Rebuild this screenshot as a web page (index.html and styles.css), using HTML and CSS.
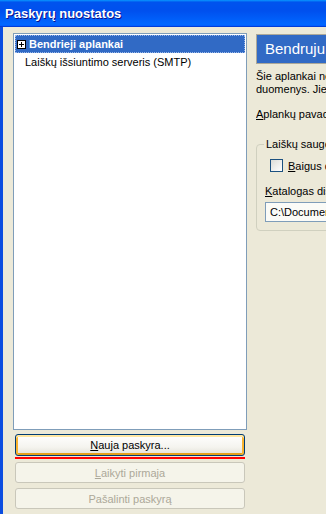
FILE: index.html
```html
<!DOCTYPE html>
<html>
<head>
  <meta charset="utf-8">
  <link rel="stylesheet" href="styles.css">
</head>
<body>
  <div class="window">
    <div class="title-bar">Paskyrų nuostatos</div>
    <div class="window-body">
      <div class="accounts">
        <div class="tree">
          <div class="tree-item selected">
            <svg class="expander" width="9" height="9" viewBox="0 0 9 9">
              <rect x="0.5" y="0.5" width="8" height="8" fill="#fff" stroke="#000"/>
              <path d="M2 4.5h5M4.5 2v5" stroke="#000"/>
            </svg>
            <span class="label">Bendrieji aplankai</span>
          </div>
          <div class="tree-item child">Laiškų išsiuntimo serveris (SMTP)</div>
        </div>
        <button class="btn focused"><u>N</u>auja paskyra...</button>
        <div class="marker"></div>
        <button class="btn second" disabled><u>L</u>aikyti pirmaja</button>
        <button class="btn third" disabled>Pašalinti paskyrą</button>
      </div>

      <div class="settings">
        <div class="settings-header">Bendruju aplankų nuostatos</div>
        <p class="intro">Šie aplankai nepriklauso jokiai paskyrai, juose saugomi bendri<br>duomenys. Jie matomi visoms paskyroms.</p>
        <div class="row"><u>A</u>plankų pavadinimas:</div>
        <fieldset class="group">
          <legend>Laiškų saugojimas</legend>
          <label class="check"><span class="box"></span><span><u>B</u>aigus darbą išvalyti šiukšlinę</span></label>
          <div class="row"><u>K</u>atalogas diske:</div>
          <div class="path">C:\Documents and Settings\Vartotojas\Mail</div>
        </fieldset>
      </div>
    </div>
  </div>
</body>
</html>
```

FILE: styles.css
```css
/* Windows XP style account settings dialog */
body {
  margin: 0;
  width: 326px;
  height: 514px;
  overflow: hidden;
  font-family: "Liberation Sans", Arial, sans-serif;
  font-size: 11px;
  color: #000;
}

.window {
  height: 514px;
  background-color: #ece9d8;
}

.title-bar {
  height: 27px;
  line-height: 27px;
  padding-left: 5px;
  color: #fff;
  font-size: 13px;
  font-weight: bold;
  text-shadow: 1px 1px #0f1089;
  background: linear-gradient(180deg, #0997ff, #0053ee 8%, #0050ee 40%, #06f 88%, #06f 93%, #005bff 95%, #003dd7 96%, #003dd7);
}

.window-body {
  display: flex;
  gap: 9px;
  height: 487px;
  padding: 6px 0 0 10px;
  border-left: 3px solid #0b4de0;
  box-sizing: border-box;
}

.accounts {
  display: flex;
  flex-direction: column;
  width: 234px;
  flex-shrink: 0;
}

.tree {
  height: 397px;
  box-sizing: border-box;
  padding: 1px;
  border: 1px solid #7f9db9;
  background-color: #fff;
}

.tree-item {
  display: flex;
  align-items: center;
  height: 18px;
  white-space: nowrap;
}

.tree-item.selected {
  padding-left: 2px;
  color: #fff;
  font-weight: bold;
  background-color: #316ac5;
  outline: 1px dotted #9ab8e8;
  outline-offset: -1px;
}

.expander {
  margin-right: 3px;
}

.tree-item.child {
  padding-left: 10px;
}

.btn {
  height: 22px;
  margin: 4px 2px 0;
  padding: 0;
  font-family: inherit;
  font-size: 11px;
  color: #000;
  border: 1px solid #003c74;
  border-radius: 3px;
  background: linear-gradient(180deg, #fff, #f5f4ef 60%, #e3e1d7);
}

.btn.focused {
  box-shadow: inset 0 2px 0 #ffe7a2, inset 2px 0 0 #f8b330, inset -2px 0 0 #f8b330, inset 0 -2px 0 #e5a01a;
}

.btn:disabled {
  height: 21px;
  color: #aca899;
  border-color: #c9c7ba;
  background: #f5f4ea;
}

.btn.second {
  margin-top: 3px;
}

.btn.third {
  margin-top: 5px;
}

.marker {
  height: 2px;
  margin: 1px 2px 0;
  background-color: #f00;
}

.settings {
  flex: 1;
  padding-top: 1px;
  white-space: nowrap;
  overflow: hidden;
}

.settings-header {
  width: 300px;
  height: 30px;
  box-sizing: border-box;
  padding-left: 8px;
  line-height: 28px;
  font-size: 15px;
  color: #fff;
  background-color: #316ac5;
  border: 1px solid #aca899;
}

.intro {
  margin: 6px 0 0;
  line-height: 13px;
}

.row {
  margin-top: 12px;
  line-height: 13px;
}

.group {
  width: 300px;
  margin: 17px 0 0 0;
  padding: 9px 8px 8px 8px;
  border: 1px solid #d0d0bf;
  border-radius: 4px;
}

.group legend {
  padding: 0 2px;
  margin-left: -1px;
}

.check {
  display: flex;
  align-items: center;
  gap: 5px;
  margin-left: 5px;
}

.box {
  width: 11px;
  height: 11px;
  border: 1px solid #1c5180;
  background: linear-gradient(135deg, #dcdcd7, #fff);
}

.group .row {
  margin-top: 13px;
}

.path {
  height: 20px;
  margin: 4px 0 0 0;
  padding-left: 4px;
  box-sizing: border-box;
  line-height: 18px;
  border: 1px solid #7f9db9;
  background-color: #fbfbf7;
}
```
